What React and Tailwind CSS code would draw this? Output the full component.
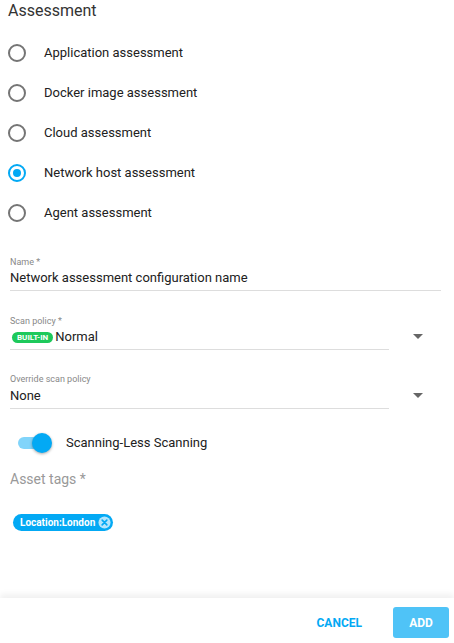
import React from "react";

const options = [
  "Application assessment",
  "Docker image assessment",
  "Cloud assessment",
  "Network host assessment",
  "Agent assessment",
];

function Radio({ checked }) {
  return checked ? (
    <span className="flex h-[18px] w-[18px] items-center justify-center rounded-full border-2 border-[#03a9f4]">
      <span className="h-[8px] w-[8px] rounded-full bg-[#03a9f4]" />
    </span>
  ) : (
    <span className="h-[18px] w-[18px] rounded-full border-2 border-[#757575]" />
  );
}

function Caret() {
  return (
    <svg width="10" height="5" viewBox="0 0 10 5" className="shrink-0">
      <path d="M0 0 L10 0 L5 5 Z" fill="#666" />
    </svg>
  );
}

export default function App() {
  const selected = 3;
  return (
    <div className="relative h-[643px] w-[454px] overflow-hidden bg-white font-['Roboto',sans-serif] text-[#212121]">
      <h1 className="px-2 text-[16px] leading-[22px] text-[#333]">Assessment</h1>

      <div className="mt-[11px] flex flex-col">
        {options.map((o, i) => (
          <label key={o} className="flex h-[40px] items-center pl-[8px]">
            <Radio checked={i === selected} />
            <span className="ml-[18px] text-[13px]">{o}</span>
          </label>
        ))}
      </div>

      <div className="mt-[24px] pl-[10px] pr-[13px]">
        <div className="text-[9px] leading-[11px] text-[#888]">Name *</div>
        <div className="mt-[2px] border-b border-[#ddd] pb-[4px] text-[13px] leading-[16px]">
          Network assessment configuration name
        </div>
      </div>

      <div className="mt-[25px] flex items-end pl-[10px]">
        <div className="w-[379px]">
          <div className="text-[9px] leading-[11px] text-[#888]">Scan policy *</div>
          <div className="mt-[2px] flex items-center border-b border-[#ddd] pb-[4px] text-[13px] leading-[16px]">
            <span className="ml-[2px] mr-[2px] rounded-full bg-[#1dc95b] px-[5px] text-[8px] font-bold leading-[11px] text-white">
              BUILT-IN
            </span>
            Normal
          </div>
        </div>
        <div className="mb-[11px] ml-[24px]">
          <Caret />
        </div>
      </div>

      <div className="mt-[24px] flex items-end pl-[10px]">
        <div className="w-[379px]">
          <div className="text-[9px] leading-[11px] text-[#888]">Override scan policy</div>
          <div className="mt-[3px] border-b border-[#ddd] pb-[4px] text-[13px] leading-[16px]">None</div>
        </div>
        <div className="mb-[11px] ml-[24px]">
          <Caret />
        </div>
      </div>

      <div className="mt-[24px] flex items-center pl-[18px]">
        <span className="relative flex h-[20px] w-[34px] items-center">
          <span className="h-[12px] w-[30px] rounded-full bg-[#81d4fa]" />
          <span className="absolute right-0 top-0 h-[20px] w-[20px] rounded-full bg-[#03a9f4] shadow-[0_1px_3px_rgba(0,0,0,0.35)]" />
        </span>
        <span className="ml-[14px] text-[13px]">Scanning-Less Scanning</span>
      </div>

      <div className="mt-[18px] pl-[10px] text-[14px] leading-[16px] text-[#999]">Asset tags *</div>

      <div className="mt-[22px] pl-[13px]">
        <span className="inline-flex h-[17px] items-center rounded-full bg-[#03a9f4] pl-[7px] pr-[2px] text-[10px] font-bold text-white">
          Location:London
          <svg width="13" height="13" viewBox="0 0 14 14" className="ml-[3px]">
            <circle cx="7" cy="7" r="6.5" fill="#b3e5fc" />
            <path d="M4.5 4.5 L9.5 9.5 M9.5 4.5 L4.5 9.5" stroke="#03a9f4" strokeWidth="1.8" strokeLinecap="round" />
          </svg>
        </span>
      </div>

      <div className="absolute bottom-0 left-0 right-0 flex h-[45px] items-end justify-end bg-white pb-[5px] pr-[5px] shadow-[0_-4px_6px_rgba(0,0,0,0.06)]">
        <span className="mr-[31px] flex h-[31px] items-center text-[12px] font-bold text-[#03a9f4]">CANCEL</span>
        <button className="h-[31px] w-[56px] rounded-[3px] bg-[#4fc3f7] text-[12px] font-bold text-white">ADD</button>
      </div>
    </div>
  );
}
